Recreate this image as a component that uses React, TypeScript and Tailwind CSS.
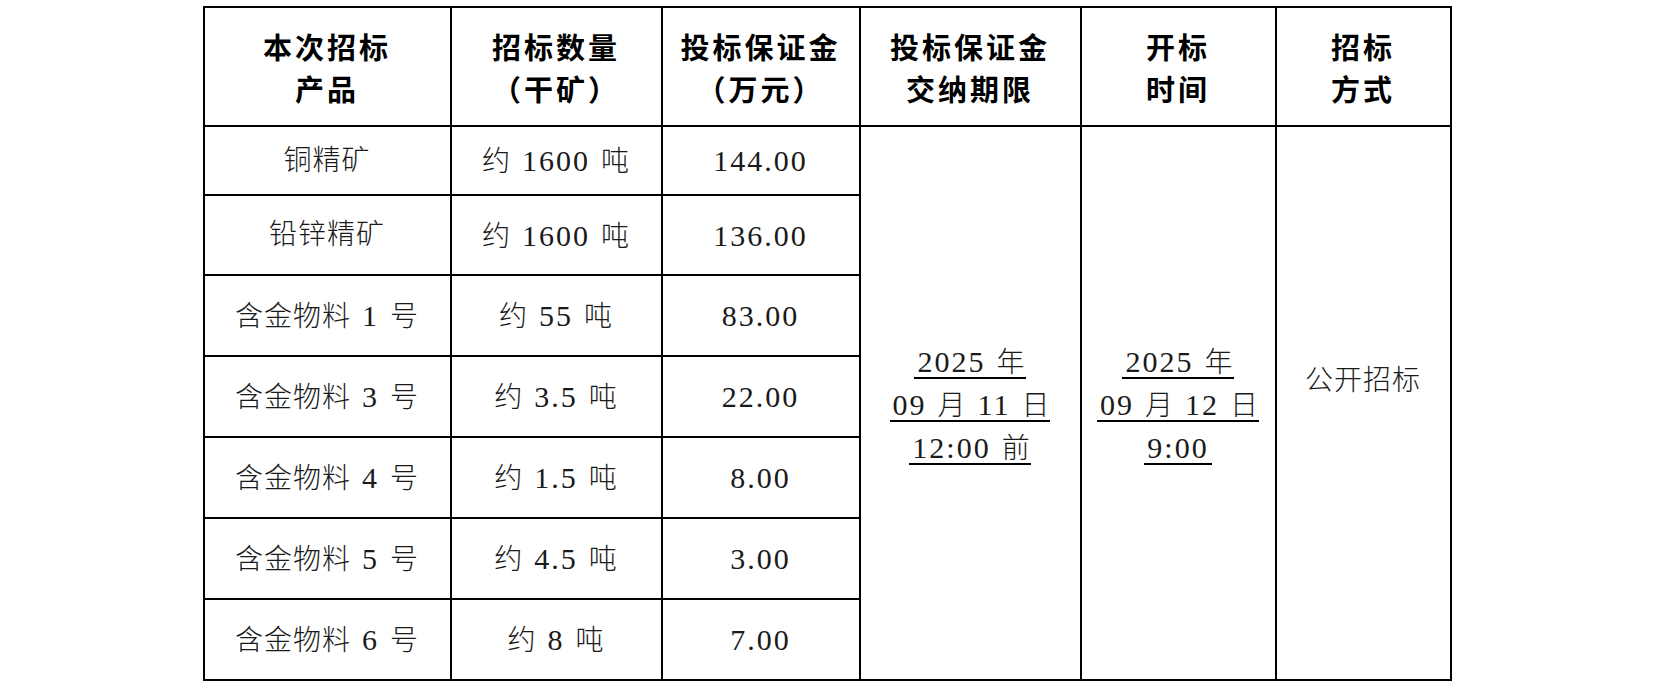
import React from "react";

const bodyFont = { fontFamily: '"Liberation Serif", "Noto Sans CJK SC", serif' };
const headFont = { fontFamily: '"Noto Sans CJK SC", sans-serif' };

function N({ children }: { children: React.ReactNode }) {
  return (
    <span className="text-[30px] tracking-[2px] px-[3px]" style={{ fontFamily: '"Liberation Serif", serif' }}>
      {children}
    </span>
  );
}

const rows: { name: React.ReactNode; qty: React.ReactNode; dep: string; h: string }[] = [
  { name: "铜精矿", qty: <>约 <N>1600</N> 吨</>, dep: "144.00", h: "h-[69px]" },
  { name: "铅锌精矿", qty: <>约 <N>1600</N> 吨</>, dep: "136.00", h: "h-[80px]" },
  { name: <>含金物料 <N>1</N> 号</>, qty: <>约 <N>55</N> 吨</>, dep: "83.00", h: "h-[81px]" },
  { name: <>含金物料 <N>3</N> 号</>, qty: <>约 <N>3.5</N> 吨</>, dep: "22.00", h: "h-[81px]" },
  { name: <>含金物料 <N>4</N> 号</>, qty: <>约 <N>1.5</N> 吨</>, dep: "8.00", h: "h-[81px]" },
  { name: <>含金物料 <N>5</N> 号</>, qty: <>约 <N>4.5</N> 吨</>, dep: "3.00", h: "h-[81px]" },
  { name: <>含金物料 <N>6</N> 号</>, qty: <>约 <N>8</N> 吨</>, dep: "7.00", h: "h-[81px]" },
];

const th = "border-2 border-black align-middle text-center font-bold text-[29px] leading-[42px] tracking-[3px] text-black";
const td = "border-2 border-black align-middle text-center text-[28px] tracking-[1px] text-[#1a1a1a] font-light";
const ul = "inline-block leading-[28px] border-b-2 border-black mb-[12px] whitespace-nowrap";

export default function App() {
  return (
    <div className="w-[1654px] h-[695px] bg-white pt-[6px]">
      <table className="mx-auto w-[1247px] table-fixed border-collapse" style={bodyFont}>
        <colgroup>
          <col className="w-[247px]" />
          <col className="w-[211px]" />
          <col className="w-[198px]" />
          <col className="w-[221px]" />
          <col className="w-[195px]" />
          <col className="w-[175px]" />
        </colgroup>
        <thead>
          <tr className="h-[119px]" style={headFont}>
            <th className={th}>本次招标<br />产品</th>
            <th className={th}>招标数量<br />（干矿）</th>
            <th className={th}>投标保证金<br />（万元）</th>
            <th className={th}>投标保证金<br />交纳期限</th>
            <th className={th}>开标<br />时间</th>
            <th className={th}>招标<br />方式</th>
          </tr>
        </thead>
        <tbody>
          {rows.map((r, i) => (
            <tr key={i} className={r.h}>
              <td className={td}>{r.name}</td>
              <td className={td}>{r.qty}</td>
              <td className={td}><N>{r.dep}</N></td>
              {i === 0 && (
                <>
                  <td rowSpan={7} className={td}>
                    <div className="flex flex-col items-center pt-[18px]">
                      <span className={ul}><N>2025</N> 年</span>
                      <span className={ul}><N>09</N> 月 <N>11</N> 日</span>
                      <span className={ul}><N>12:00</N> 前</span>
                    </div>
                  </td>
                  <td rowSpan={7} className={td}>
                    <div className="flex flex-col items-center pt-[18px]">
                      <span className={ul}><N>2025</N> 年</span>
                      <span className={ul}><N>09</N> 月 <N>12</N> 日</span>
                      <span className={ul}><N>9:00</N></span>
                    </div>
                  </td>
                  <td rowSpan={7} className={td}>
                    <div className="pb-[44px]">公开招标</div>
                  </td>
                </>
              )}
            </tr>
          ))}
        </tbody>
      </table>
    </div>
  );
}
